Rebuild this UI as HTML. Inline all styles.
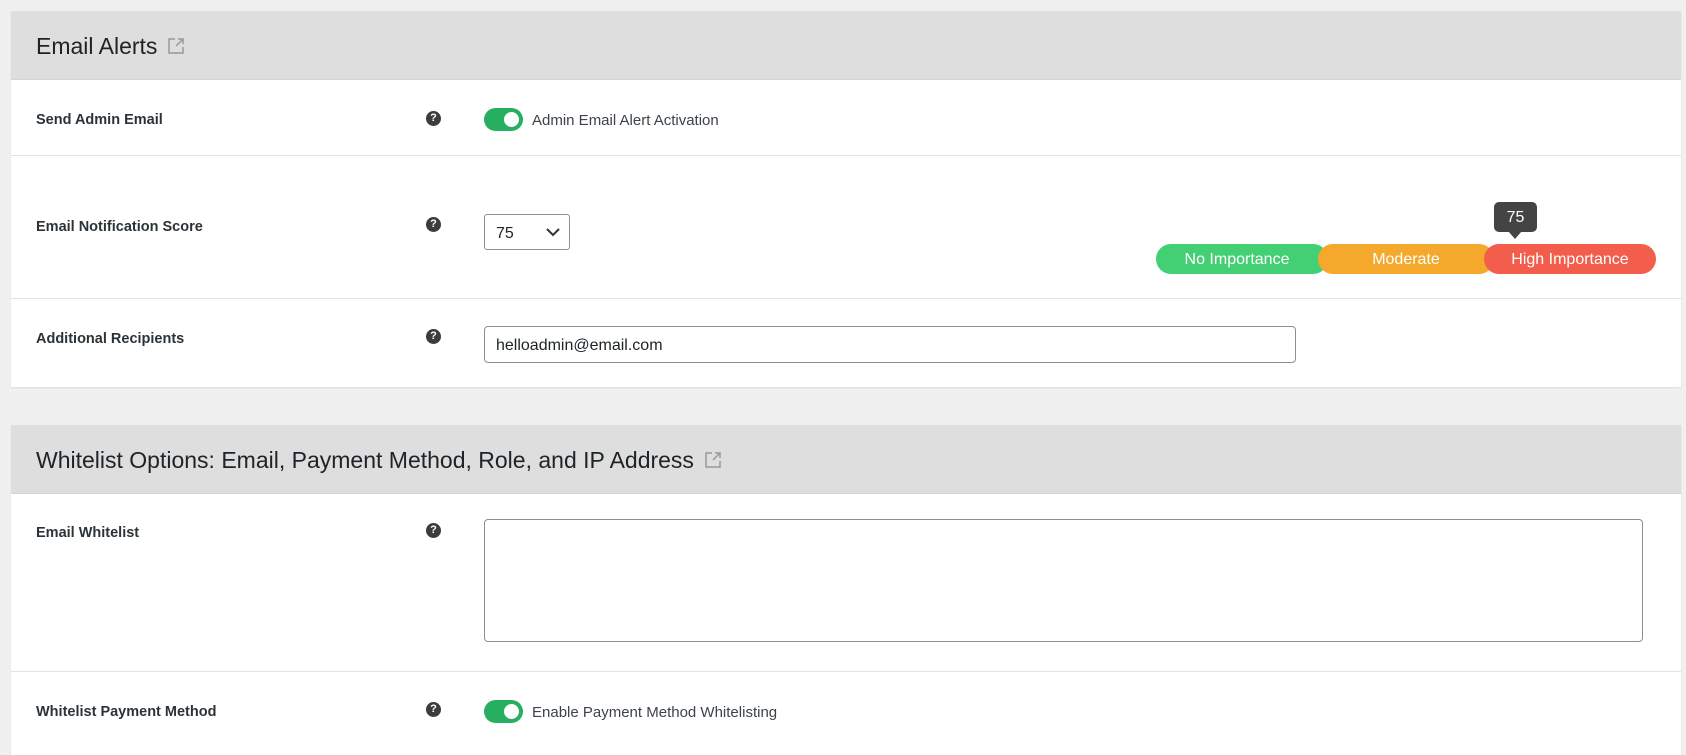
<!DOCTYPE html>
<html><head><meta charset="utf-8"><style>
*{box-sizing:border-box;margin:0;padding:0}
body{width:1686px;height:739px;background:#f0f0f1;font-family:"Liberation Sans",sans-serif;color:#1d2327;position:relative;overflow:hidden}
.card{position:absolute;left:11px;width:1670px;background:#fff;box-shadow:0 1px 2px rgba(0,0,0,.08)}
.hd{height:69px;background:#dedede;border-bottom:1px solid #d4d4d4;padding-left:25px;display:flex;align-items:center;font-size:23px;color:#1d2327;padding-top:2px}
.hd svg{margin-left:10px}
.row{position:absolute;left:0;right:0;border-bottom:1px solid #e2e2e2}
.lbl{position:absolute;left:25px;font-size:14.5px;font-weight:bold;color:#2c3338}
.q{position:absolute;left:415px;width:15px;height:15px;border-radius:50%;background:#3c3c3c;color:#fff;font-size:11px;font-weight:bold;text-align:center;line-height:15px}
.tg{position:absolute;left:473px;width:39px;height:23px;border-radius:12px;background:#27ae60}
.tg:after{content:"";position:absolute;right:4px;top:4px;width:15px;height:15px;border-radius:50%;background:#fff}
.tl{position:absolute;left:521px;font-size:15px;color:#3c434a}
.seg{position:absolute;top:244px;height:30px;border-radius:15px;color:#fff;font-size:16px;text-align:center;line-height:31px}
</style></head><body>
<div class="card" style="top:11px;height:376px">
 <div class="hd">Email Alerts <svg width="18" height="18" viewBox="0 0 18 18" fill="none" stroke="#999" stroke-width="1.5"><path d="M8 2H2v14h14v-6"/><path d="M11 2h5v5M16 2l-7 7"/></svg></div>
 <div class="row" style="top:69px;height:76px">
  <div class="lbl" style="top:32px">Send Admin Email</div><div class="q" style="top:31px">?</div>
  <div class="tg" style="top:28px"></div><div class="tl" style="top:32px">Admin Email Alert Activation</div>
 </div>
 <div class="row" style="top:145px;height:143px">
  <div class="lbl" style="top:63px">Email Notification Score</div><div class="q" style="top:61px">?</div>
  <div style="position:absolute;left:473px;top:58px;width:86px;height:36px;border:1px solid #8c8f94;border-radius:3px;font-size:16px;padding:10px 0 0 11px">75<svg style="position:absolute;right:9px;top:13px" width="14" height="9" viewBox="0 0 14 9" fill="none" stroke="#333" stroke-width="2"><path d="M1 1l6 6 6-6"/></svg></div>
 </div>
 <div class="row" style="top:288px;height:88px;border:none">
  <div class="lbl" style="top:32px">Additional Recipients</div><div class="q" style="top:30px">?</div>
  <div style="position:absolute;left:473px;top:27px;width:812px;height:37px;border:1px solid #8c8f94;border-radius:4px;font-size:16px;padding:10px 0 0 11px">helloadmin@email.com</div>
 </div>
</div>
<div class="seg" style="left:1156px;width:172px;background:#43cf73;padding-right:10px">No Importance</div>
<div class="seg" style="left:1318px;width:176px;background:#f4a92d">Moderate</div>
<div class="seg" style="left:1484px;width:172px;background:#f35d4c">High Importance</div>
<div style="position:absolute;left:1494px;top:202px;width:43px;height:30px;background:#444;border-radius:5px;color:#fff;font-size:16px;text-align:center;line-height:32px">75</div>
<div style="position:absolute;left:1508px;top:231px;border-left:7px solid transparent;border-right:7px solid transparent;border-top:8px solid #444"></div>
<div class="card" style="top:425px;height:330px">
 <div class="hd">Whitelist Options: Email, Payment Method, Role, and IP Address <svg width="18" height="18" viewBox="0 0 18 18" fill="none" stroke="#999" stroke-width="1.5"><path d="M8 2H2v14h14v-6"/><path d="M11 2h5v5M16 2l-7 7"/></svg></div>
 <div class="row" style="top:67px;height:180px">
  <div class="lbl" style="top:33px">Email Whitelist</div><div class="q" style="top:31px">?</div>
  <div style="position:absolute;left:473px;top:27px;width:1159px;height:123px;border:1px solid #8c8f94;border-radius:4px"></div>
 </div>
 <div class="row" style="top:247px;height:80px;border:none">
  <div class="lbl" style="top:32px">Whitelist Payment Method</div><div class="q" style="top:30px">?</div>
  <div class="tg" style="top:28px"></div><div class="tl" style="top:32px">Enable Payment Method Whitelisting</div>
 </div>
</div>
</body></html>
